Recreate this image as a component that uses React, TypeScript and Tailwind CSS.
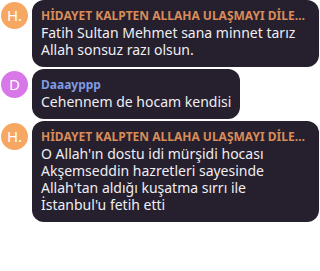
import React from "react";

type Msg = {
  initial: string;
  avatarBg: string;
  name: string;
  nameColor: string;
  lines: string[];
};

const msgs: Msg[] = [
  {
    initial: "H.",
    avatarBg: "bg-[#f6a862]",
    name: "HİDAYET KALPTEN ALLAHA ULAŞMAYI DİLEYENLER",
    nameColor: "text-[#d98c58]",
    lines: ["Fatih Sultan Mehmet sana minnet tarız", "Allah sonsuz razı olsun."],
  },
  {
    initial: "D",
    avatarBg: "bg-[#d877e8]",
    name: "Daaayppp",
    nameColor: "text-[#7f9be0]",
    lines: ["Cehennem de hocam kendisi"],
  },
  {
    initial: "H.",
    avatarBg: "bg-[#f6a862]",
    name: "HİDAYET KALPTEN ALLAHA ULAŞMAYI DİLEYENLER",
    nameColor: "text-[#d98c58]",
    lines: [
      "O Allah'ın dostu idi mürşidi hocası",
      "Akşemseddin hazretleri sayesinde",
      "Allah'tan aldığı kuşatma sırrı ile",
      "İstanbul'u fetih etti",
    ],
  },
];

export default function App() {
  return (
    <div
      className="w-[320px] h-[271px] bg-white flex flex-col gap-[2px] pl-[1px] overflow-hidden"
      style={{ fontFamily: '"Noto Sans", "Open Sans", sans-serif' }}
    >
      {msgs.map((m, i) => (
        <div key={i} className="flex items-start gap-[4px]">
          <div
            className={`${m.avatarBg} mt-[2px] w-[27px] h-[27px] shrink-0 rounded-full flex items-center justify-center text-white text-[15px] leading-none`}
          >
            {m.initial}
          </div>
          <div className="min-w-0 max-w-[287px] rounded-[12px] bg-[#251f2e] pl-[9px] pr-[9px] pt-[7px] pb-[9px]">
            <div className={`${m.nameColor} text-[12px] font-bold leading-[17px] truncate`}>
              {m.name}
            </div>
            {m.lines.map((l, j) => (
              <div
                key={j}
                className="text-[#f0eef2] text-[14px] leading-[17px] whitespace-nowrap"
              >
                {l}
              </div>
            ))}
          </div>
        </div>
      ))}
    </div>
  );
}
